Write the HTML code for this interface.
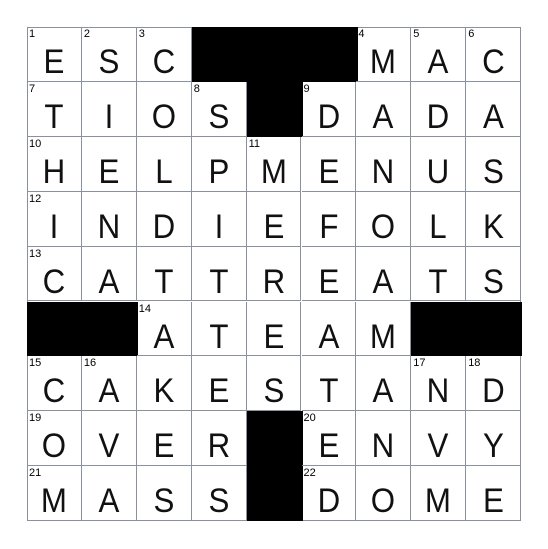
<!DOCTYPE html>
<html><head><style>
body{margin:0;background:#fff;width:548px;height:549px;position:relative;font-family:"Liberation Sans",sans-serif}
.g{position:absolute;left:27px;top:27px;width:494px;height:494px;border:1px solid #8b919b;box-sizing:border-box}
.c{position:absolute;width:54.9px;height:54.9px;box-sizing:border-box;border-right:1px solid #8b919b;border-bottom:1px solid #8b919b}
.b{background:#000;border-color:#000}
.n{position:absolute;left:2px;top:1px;font-size:11px;color:#000}
.l{position:absolute;left:0;right:0;top:15px;line-height:40px;text-align:center;font-size:34px;color:#111;transform:scaleX(0.92)}
</style></head><body><div class="g" id="g"></div>
<script>
var rows=["ESC###MAC","TIOS#DADA","HELPMENUS","INDIEFOLK","CATTREATS","##ATEAM##","CAKESTAND","OVER#ENVY","MASS#DOME"];
var nums={"0,0":1,"0,1":2,"0,2":3,"0,6":4,"0,7":5,"0,8":6,"1,0":7,"1,3":8,"1,5":9,"2,0":10,"2,4":11,"3,0":12,"4,0":13,"5,2":14,"6,0":15,"6,1":16,"6,7":17,"6,8":18,"7,0":19,"7,5":20,"8,0":21,"8,5":22};
var g=document.getElementById('g'),h='';
for(var r=0;r<9;r++)for(var c=0;c<9;c++){var ch=rows[r][c];var s='left:'+(c*54.9-1)+'px;top:'+(r*54.9-1)+'px;'+(c==8?'border-right:none;':'')+(r==8?'border-bottom:none;':'');
if(ch=='#'){h+='<div class="c b" style="'+s+'width:56px;"></div>';continue;}
var n=nums[r+','+c];h+='<div class="c" style="'+s+'">'+(n?'<span class="n">'+n+'</span>':'')+'<span class="l">'+ch+'</span></div>';}
g.innerHTML=h;
</script></body></html>
